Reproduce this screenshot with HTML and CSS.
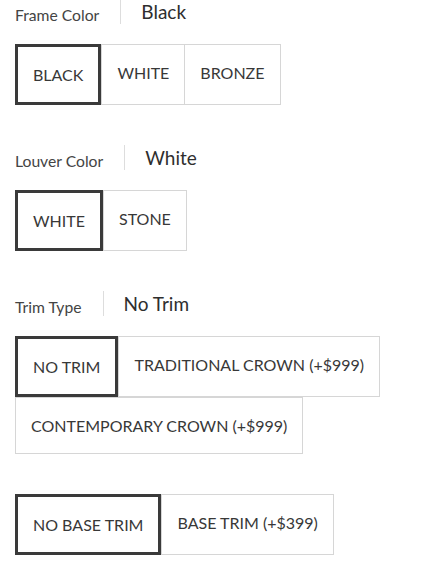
FILE: index.html
```html
<!DOCTYPE html>
<html>
<head>
<meta charset="utf-8">
<link rel="stylesheet" href="styles.css">
</head>
<body>
<div class="page">
  <section class="group">
    <div class="head"><span class="label">Frame Color</span><span class="value">Black</span></div>
    <div class="opts">
      <div class="opt sel">BLACK</div>
      <div class="opt">WHITE</div>
      <div class="opt">BRONZE</div>
    </div>
  </section>
  <section class="group">
    <div class="head"><span class="label">Louver Color</span><span class="value">White</span></div>
    <div class="opts">
      <div class="opt sel">WHITE</div>
      <div class="opt">STONE</div>
    </div>
  </section>
  <section class="group">
    <div class="head"><span class="label">Trim Type</span><span class="value">No Trim</span></div>
    <div class="opts">
      <div class="opt sel">NO TRIM</div>
      <div class="opt">TRADITIONAL CROWN (+$999)</div>
      <div class="opt wrap">CONTEMPORARY CROWN (+$999)</div>
    </div>
  </section>
  <section class="group">
    <div class="opts">
      <div class="opt sel">NO BASE TRIM</div>
      <div class="opt">BASE TRIM (+$399)</div>
    </div>
  </section>
</div>
</body>
</html>
```
FILE: styles.css
```css
html, body { margin: 0; padding: 0; background: #fff; }
body { font-family: "Lato", "Liberation Sans", sans-serif; color: #333; }
.page { padding: 0 15px; margin-top: -1px; }
.group { margin-bottom: 40px; }
.head { display: flex; height: 25px; margin-bottom: 20px; }
.label { font-size: 15.7px; line-height: 25px; padding-top: 4px; height: 21px; padding-right: 21px; border-right: 1px solid #ddd; color: #444; }
.value { font-size: 19px; line-height: 25px; padding-left: 20px; color: #2e2e2e; }
.opts { display: flex; flex-wrap: wrap; }
.opt { font-size: 16px; line-height: 21px; padding: 17px 15px; border: 1px solid #d6d6d6; margin-left: -1px; color: #383838; background: #fff; }
.opt:first-child, .opt.wrap { margin-left: 0; }
.opt.sel { border: 3px solid #3a3a3a; }
.opt.sel + .opt { margin-left: 0; }
```
